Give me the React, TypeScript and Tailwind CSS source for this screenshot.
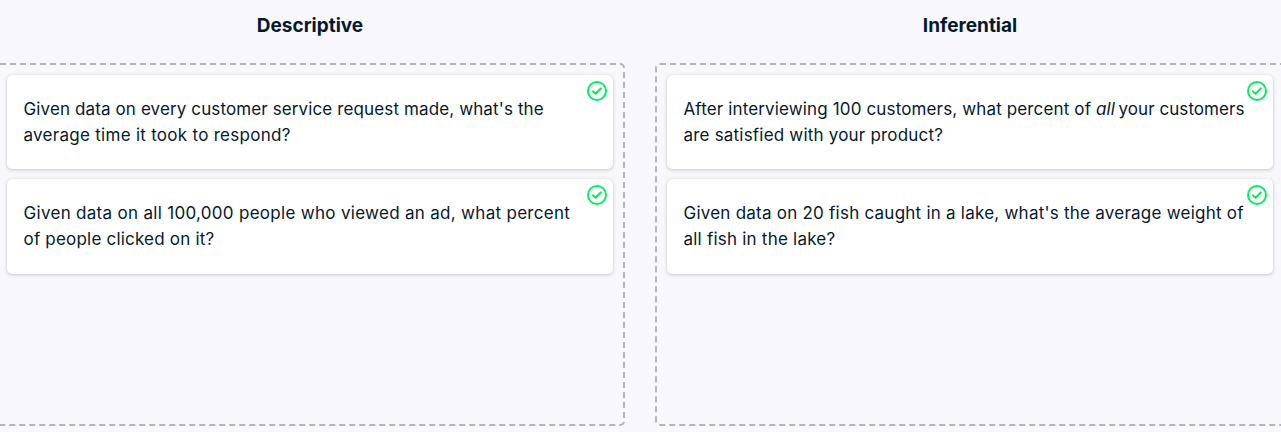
import type { ReactNode } from 'react';

type Line = { content: ReactNode; tracking: string };
type Column = { title: string; cards: Line[][] };

const columns: Column[] = [
  {
    title: 'Descriptive',
    cards: [
      [
        { content: "Given data on every customer service request made, what's the", tracking: 'tracking-[0.12px]' },
        { content: 'average time it took to respond?', tracking: 'tracking-[0.28px]' },
      ],
      [
        { content: 'Given data on all 100,000 people who viewed an ad, what percent', tracking: 'tracking-[0.3px]' },
        { content: 'of people clicked on it?', tracking: 'tracking-[0.2px]' },
      ],
    ],
  },
  {
    title: 'Inferential',
    cards: [
      [
        {
          content: (
            <>
              After interviewing 100 customers, what percent of <em className="-mr-[1.5px]">all</em>{' '}
              <span className="tracking-[0.06px]">your customers</span>
            </>
          ),
          tracking: 'tracking-[0.14px]',
        },
        { content: 'are satisfied with your product?', tracking: 'tracking-[0.2px]' },
      ],
      [
        { content: "Given data on 20 fish caught in a lake, what's the average weight of", tracking: 'tracking-[0.235px]' },
        { content: 'all fish in the lake?', tracking: 'tracking-[0.22px]' },
      ],
    ],
  },
];

function CheckBadge() {
  return (
    <svg className="absolute top-1.5 right-1.5 size-5" viewBox="0 0 20 20" fill="none" stroke="#03ef62" strokeWidth="2">
      <circle cx="10" cy="10" r="9" />
      <path d="M6 10.4 8.6 12.8 13.8 7.4" strokeWidth="2.1" strokeLinecap="round" strokeLinejoin="round" />
    </svg>
  );
}

function Card({ lines }: { lines: Line[] }) {
  return (
    <li className="relative rounded-[5px] bg-white px-[16.5px] pt-[21px] pb-[21.4px] shadow-[0_1px_4px_-1px_rgba(5,25,45,0.3),0_0_1px_rgba(5,25,45,0.12)]">
      {lines.map((line, i) => (
        <span key={i} className={`block w-max whitespace-nowrap leading-[26px] ${line.tracking}`}>
          {line.content}
        </span>
      ))}
      <CheckBadge />
    </li>
  );
}

export default function App() {
  return (
    <main className="h-[432px] w-full overflow-hidden bg-[#f7f7fc] font-['Inter','Liberation_Sans',sans-serif] text-[17px] text-[#05192d]">
      <div className="-ml-[5px] flex w-[1290px] gap-[30px]">
        {columns.map((column) => (
          <section key={column.title} className="w-[630px]">
            <h2 className="h-[63px] pt-[13px] text-center text-[19px] leading-[26px] font-bold">{column.title}</h2>
            <ul className="flex h-[363px] flex-col gap-2.5 rounded-[5px] border-2 border-dashed border-[#b0b5bf] p-2.5">
              {column.cards.map((lines, i) => (
                <Card key={i} lines={lines} />
              ))}
            </ul>
          </section>
        ))}
      </div>
    </main>
  );
}
